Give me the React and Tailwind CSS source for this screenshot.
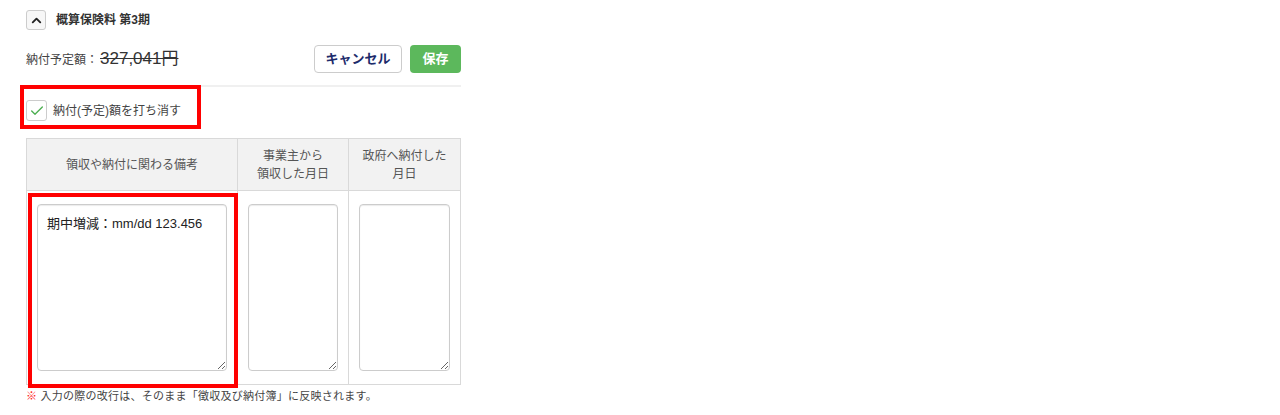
import { ChevronUp, Check } from "lucide-react";

const font = { fontFamily: '"Liberation Sans", "Noto Sans CJK JP", sans-serif' };

function HeaderCell({ children, last }) {
  return (
    <div
      className={`flex items-center justify-center text-center text-[12px] leading-[18px] text-[#555] bg-[#f2f2f2] ${
        last ? "" : "border-r border-[#d9d9d9]"
      }`}
    >
      {children}
    </div>
  );
}

function Memo({ value, last, marked }) {
  return (
    <div
      className={`relative px-[10px] pt-[13px] pb-[13px] ${last ? "" : "border-r border-[#d9d9d9]"}`}
    >
      <textarea
        defaultValue={value}
        className="block w-full h-[167px] rounded-[4px] border border-[#cccccc] bg-white px-[9px] py-[10px] text-[13px] leading-[18px] text-[#222] shadow-[inset_0_1px_1px_rgba(0,0,0,0.08)] focus:outline-none"
        style={font}
      />
      {marked && (
        <span className="pointer-events-none absolute left-px top-[2px] -right-px -bottom-[4px] border-4 border-[#ff0000]" />
      )}
    </div>
  );
}

export default function App() {
  return (
    <div className="w-[1280px] h-[415px] bg-white" style={font}>
      <div className="ml-[26px] w-[435px] pt-[10px]">
        <div className="flex items-center gap-[10px]">
          <button className="flex h-[20px] w-[20px] items-center justify-center rounded-[3px] border border-[#cccccc] bg-[#f7f7f7] text-[#222]">
            <ChevronUp size={15} strokeWidth={3} />
          </button>
          <span className="text-[12px] font-bold text-[#333]">概算保険料 第3期</span>
        </div>

        <div className="mt-[15px] flex items-center justify-between">
          <div className="flex items-baseline text-[#444]">
            <span className="text-[12px]">納付予定額：</span>
            <span className="ml-[2px] text-[17px] text-[#333] line-through">327,041円</span>
          </div>
          <div className="flex gap-[8px]">
            <button className="h-[28px] w-[88px] rounded-[4px] border border-[#cccccc] bg-white text-[13px] font-bold text-[#1d2b6b]">
              キャンセル
            </button>
            <button className="h-[28px] w-[51px] rounded-[4px] bg-[#5cb85c] text-[13px] font-bold text-white">
              保存
            </button>
          </div>
        </div>

        <div className="mt-[12px] h-[2px] bg-[#f0f0f0]" />

        <div className="relative mt-[13px] flex items-center gap-[6px]">
          <span className="flex h-[21px] w-[21px] items-center justify-center rounded-[3px] border border-[#cccccc] bg-white">
            <Check size={16} strokeWidth={2} className="text-[#4caf50]" />
          </span>
          <span className="text-[12px] text-[#444]">納付(予定)額を打ち消す</span>
          <span className="pointer-events-none absolute -left-[6px] -top-[15px] h-[44px] w-[181px] border-4 border-[#ff0000]" />
        </div>

        <div className="mt-[17px] border border-[#d9d9d9]">
          <div className="grid grid-cols-[211px_111px_1fr] h-[52px] border-b border-[#d9d9d9]">
            <HeaderCell>領収や納付に関わる備考</HeaderCell>
            <HeaderCell>
              事業主から
              <br />
              領収した月日
            </HeaderCell>
            <HeaderCell last>
              政府へ納付した
              <br />
              月日
            </HeaderCell>
          </div>
          <div className="grid grid-cols-[211px_111px_1fr]">
            <Memo value="期中増減：mm/dd 123.456" marked />
            <Memo value="" />
            <Memo value="" last />
          </div>
        </div>

        <p className="mt-[3px] text-[11px] tracking-[0.25px] text-[#444]">
          <span className="font-bold text-[#ff1a1a]">※</span> 入力の際の改行は、そのまま「徴収及び納付簿」に反映されます。
        </p>
      </div>
    </div>
  );
}
